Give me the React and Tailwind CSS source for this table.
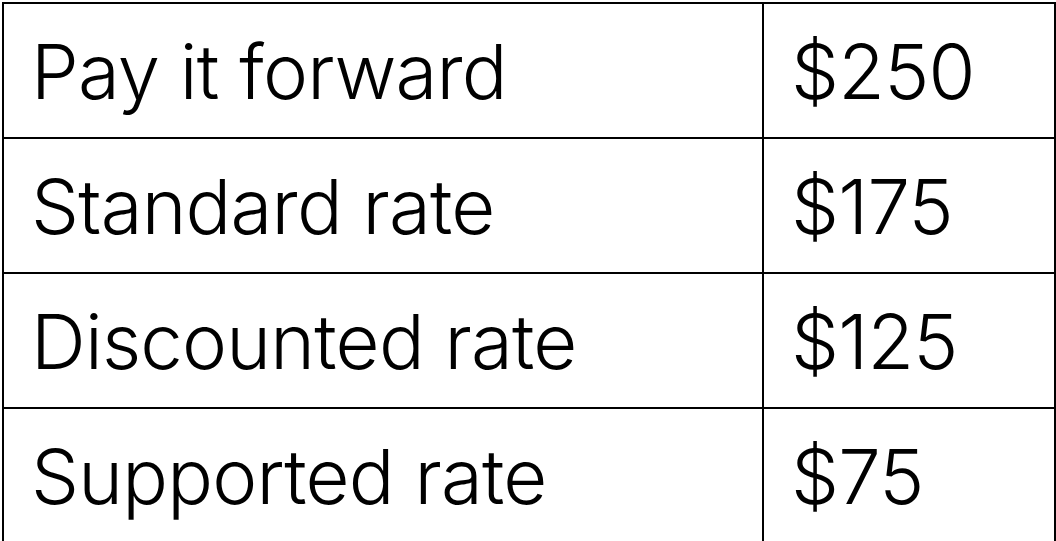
const rows = [
  ['Pay it forward', '$250'],
  ['Standard rate', '$175'],
  ['Discounted rate', '$125'],
  ['Supported rate', '$75'],
];

export default function App() {
  return (
    <div className="w-[1056px] h-[541px] bg-white pt-[2px] pl-[2px]">
      <table
        className="border-collapse border-2 border-black text-black"
        style={{ fontFamily: 'Inter, "Noto Sans", sans-serif' }}
      >
        <tbody>
          {rows.map(([label, price]) => (
            <tr key={label} className="h-[135px]">
              <td className="w-[760px] border-2 border-black pl-[27px] text-[76px] leading-none tracking-[-0.01em] font-light">
                {label}
              </td>
              <td className="w-[292px] border-2 border-black pl-[27px] text-[76px] leading-none tracking-[-0.01em] font-light">
                {price}
              </td>
            </tr>
          ))}
        </tbody>
      </table>
    </div>
  );
}
